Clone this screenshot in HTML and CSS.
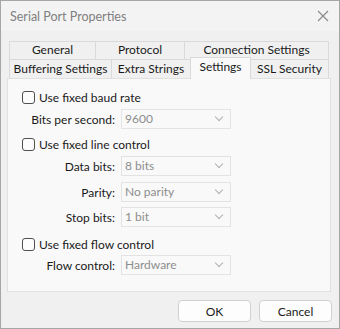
FILE: index.html
```html
<!DOCTYPE html>
<html lang="en">

<head>
  <meta charset="UTF-8">
  <title>Serial Port Properties</title>
  <link rel="stylesheet" href="styles.css">
</head>

<body>

  <div class="window">
    <div class="titlebar">
      <span class="title">Serial Port Properties</span>
      <svg class="close" width="12" height="12" viewBox="0 0 12 12">
        <path d="M1 1 L11 11 M11 1 L1 11" stroke="#8a8a8a" stroke-width="1.2" fill="none" />
      </svg>
    </div>

    <div class="content">
      <div class="tabs">
        <div class="tab-row">
          <div class="tab tab-general">General</div>
          <div class="tab tab-protocol">Protocol</div>
          <div class="tab tab-connection">Connection Settings</div>
        </div>
        <div class="tab-row tab-row-front">
          <div class="tab tab-buffering">Buffering Settings</div>
          <div class="tab tab-strings">Extra Strings</div>
          <div class="tab tab-settings selected">Settings</div>
          <div class="tab tab-ssl">SSL Security</div>
        </div>
      </div>

      <div class="panel">
        <label class="check">
          <span class="box"></span>
          <span>Use fixed baud rate</span>
        </label>
        <div class="field">
          <span class="field-label">Bits per second:</span>
          <div class="select">9600<span class="chevron"></span></div>
        </div>

        <label class="check check-line">
          <span class="box"></span>
          <span>Use fixed line control</span>
        </label>
        <div class="field">
          <span class="field-label">Data bits:</span>
          <div class="select">8 bits<span class="chevron"></span></div>
        </div>
        <div class="field field-parity">
          <span class="field-label">Parity:</span>
          <div class="select">No parity<span class="chevron"></span></div>
        </div>
        <div class="field field-stop">
          <span class="field-label">Stop bits:</span>
          <div class="select">1 bit<span class="chevron"></span></div>
        </div>

        <label class="check check-flow">
          <span class="box"></span>
          <span>Use fixed flow control</span>
        </label>
        <div class="field field-flow">
          <span class="field-label">Flow control:</span>
          <div class="select">Hardware<span class="chevron"></span></div>
        </div>
      </div>

      <div class="buttons">
        <button class="btn">OK</button>
        <button class="btn">Cancel</button>
      </div>
    </div>
  </div>

</body>

</html>
```

FILE: styles.css
```css
body {
  margin: 0;
  padding: 0;
  font-family: "Segoe UI", Lato, sans-serif;
  font-size: 12px;
  color: #1a1a1a;
  background-color: #f0f0f0;
}

.window {
  width: 340px;
  height: 329px;
  box-sizing: border-box;
  border: 1px solid #a6a6a6;
  background-color: #f0f0f0;
  display: flex;
  flex-direction: column;
}

.titlebar {
  height: 30px;
  background-color: #f3f3f3;
  display: flex;
  align-items: center;
  justify-content: space-between;
  padding: 0 10px 0 9px;
}

.title {
  color: #808080;
  font-size: 12.5px;
}

.content {
  padding: 10px 7px 0 6px;
}

/* tabs */

.tabs {
  margin-left: 2px;
}

.tab-row {
  display: flex;
}

.tab {
  box-sizing: border-box;
  height: 18px;
  border: 1px solid #dadada;
  border-bottom: none;
  margin-left: -1px;
  text-align: center;
  line-height: 16px;
  white-space: nowrap;
  background-color: #f0f0f0;
}

.tab-row .tab:first-child {
  margin-left: 0;
}

.tab-row-front .tab {
  height: 19px;
  line-height: 18px;
}

.tab-general { width: 87px; }
.tab-protocol { width: 90px; }
.tab-connection { width: 145px; }
.tab-buffering { width: 103px; }
.tab-strings { width: 80px; }
.tab-settings { width: 61px; }
.tab-ssl { width: 79px; }

.tab.selected {
  background-color: #f9f9f9;
  height: 22px;
  margin-top: -2px;
  margin-bottom: -1px;
  line-height: 18px;
  position: relative;
}

/* panel */

.panel {
  box-sizing: border-box;
  width: 324px;
  height: 214px;
  border: 1px solid #e0e0e0;
  background-color: #f9f9f9;
  padding: 12px 0 0 14px;
}

.check {
  display: flex;
  align-items: center;
  gap: 4px;
  height: 13px;
}

.check-line {
  margin-top: 9px;
}

.check-flow {
  margin-top: 11px;
}

.box {
  box-sizing: border-box;
  width: 13px;
  height: 13px;
  border: 1px solid #4f4f4f;
  border-radius: 3px;
  background-color: #fdfdfd;
}

.field {
  display: flex;
  align-items: center;
  gap: 6px;
  margin-top: 5px;
}

.field-parity {
  margin-top: 6px;
}

.field-flow {
  margin-top: 4px;
}

.field-label {
  width: 93px;
  text-align: right;
}

.select {
  box-sizing: border-box;
  position: relative;
  width: 110px;
  height: 20px;
  border: 1px solid #e3e3e3;
  background-color: #f9f9f9;
  color: #8d8d8d;
  padding-left: 3px;
  line-height: 18px;
}

.chevron {
  position: absolute;
  right: 8px;
  top: 4px;
  width: 5px;
  height: 5px;
  border-right: 1px solid #b0b0b0;
  border-bottom: 1px solid #b0b0b0;
  transform: rotate(45deg);
}

/* buttons */

.buttons {
  display: flex;
  justify-content: flex-end;
  gap: 8px;
  margin-top: 8px;
}

.btn {
  width: 73px;
  height: 22px;
  font-family: inherit;
  font-size: 12px;
  color: #1a1a1a;
  background-color: #fdfdfd;
  border: 1px solid #d0d0d0;
  border-radius: 4px;
  padding: 0;
}
```
